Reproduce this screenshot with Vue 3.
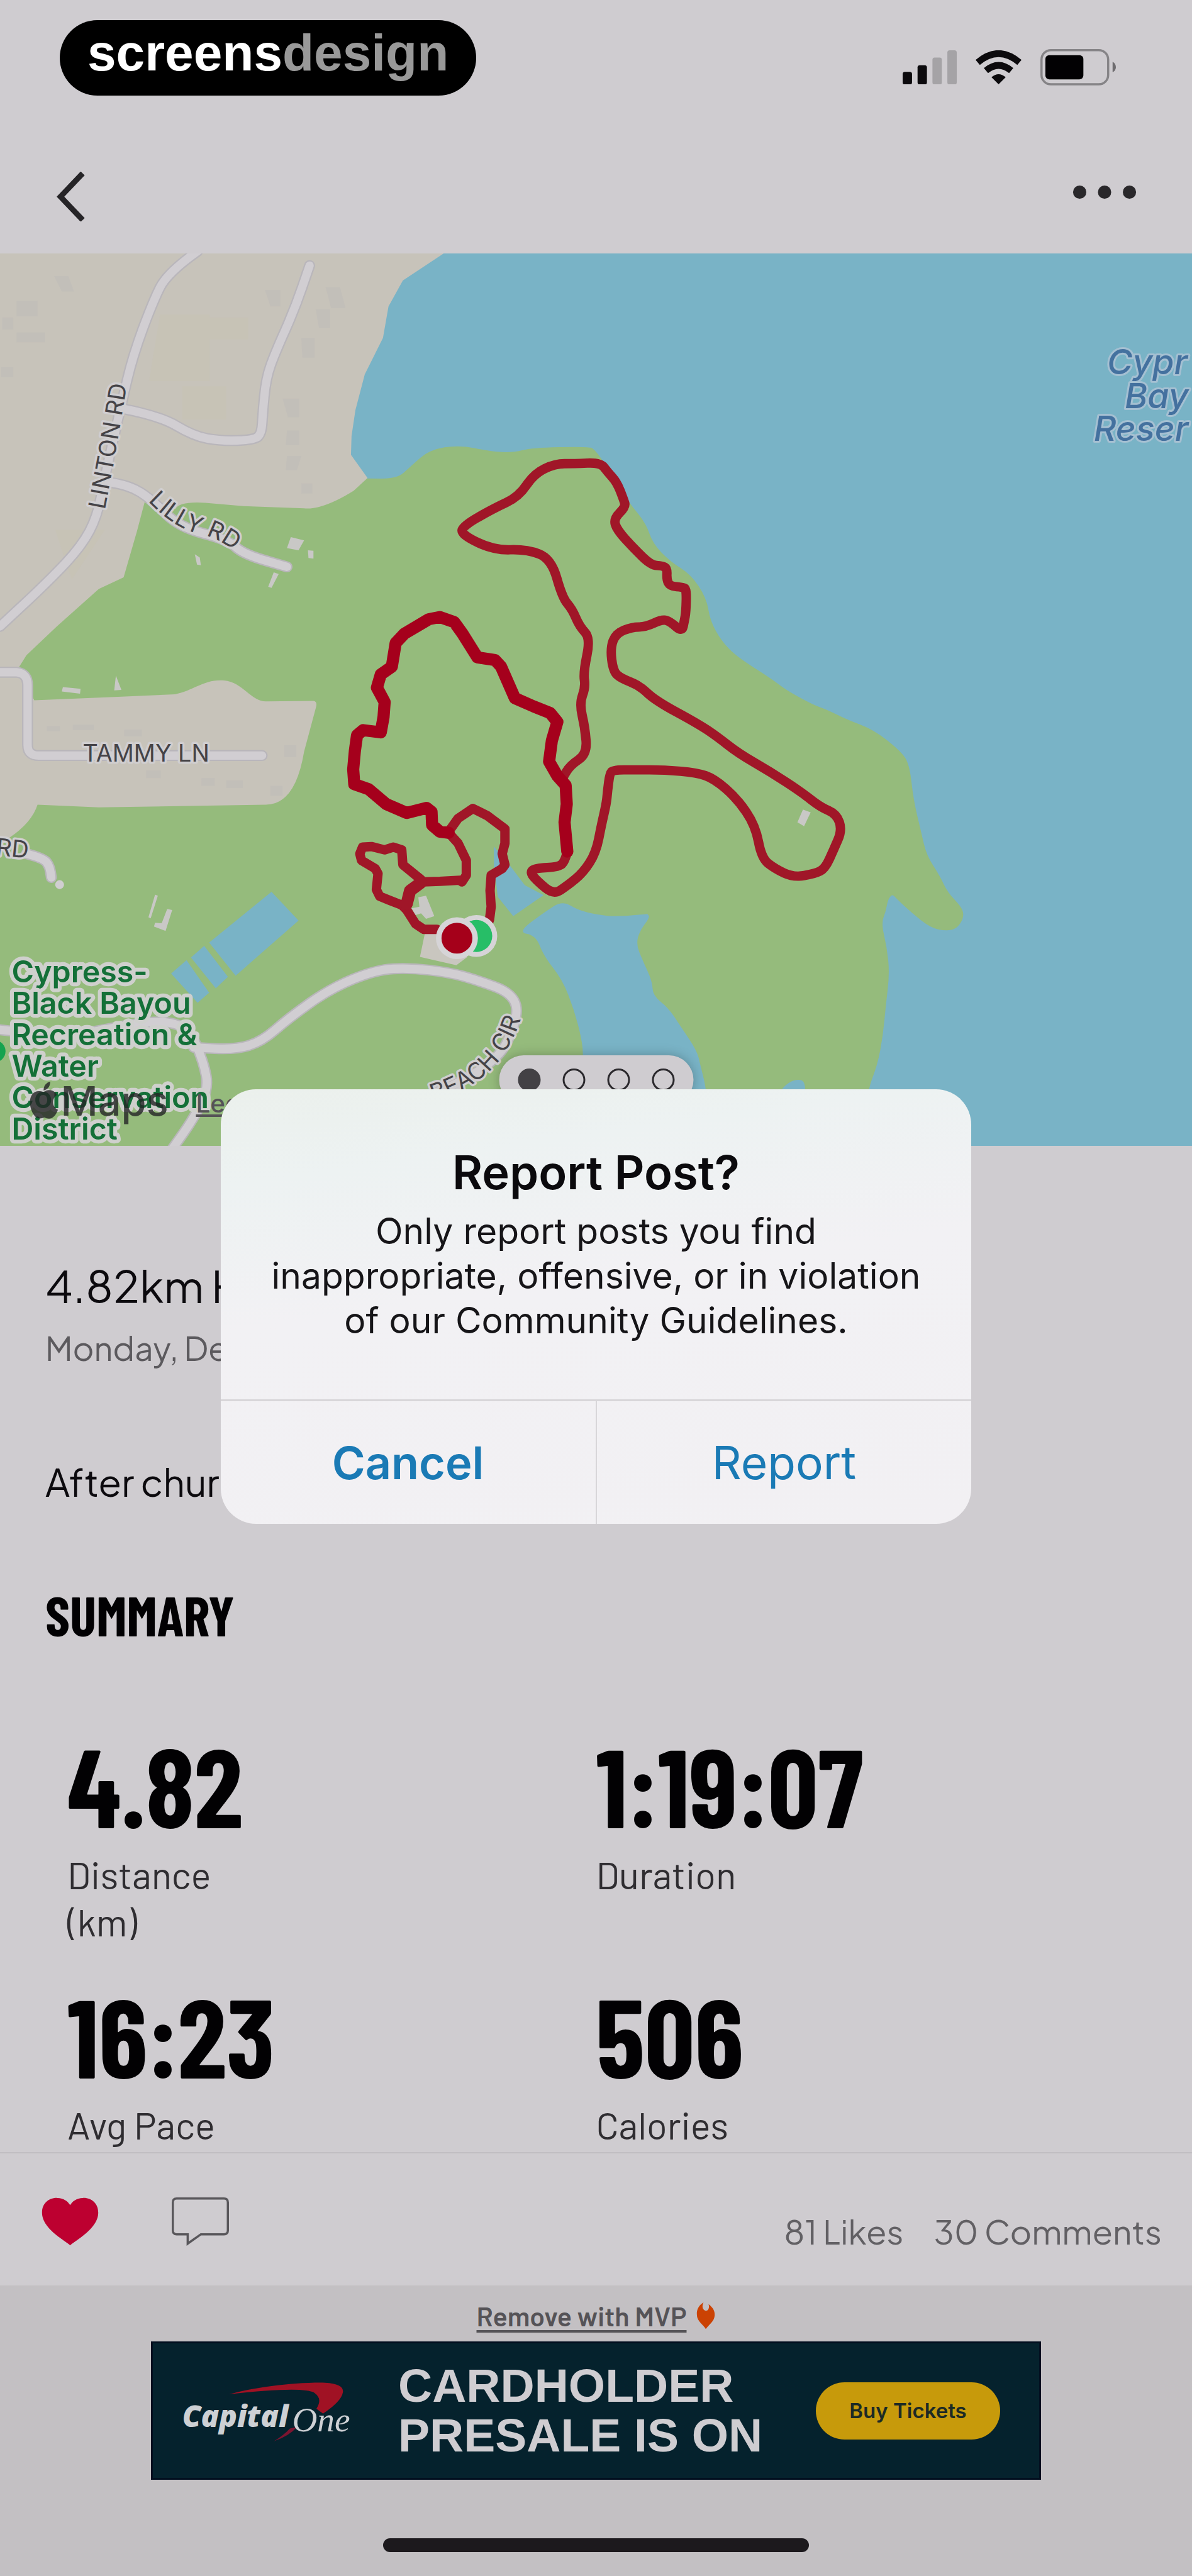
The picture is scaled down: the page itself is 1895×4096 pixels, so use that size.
<template>
  <div class="screen">
    <header>
      <div class="status-bar">
        <div class="brand"><span>screens</span><span class="brand-muted">design</span></div>
        <div class="status-icons">
          <svg class="icon-signal" viewBox="0 0 98 62" aria-hidden="true">
            <rect x="0" y="39" width="17" height="23" rx="4" fill="#0c0a0d" />
            <rect x="27" y="27" width="17" height="35" rx="4" fill="#0c0a0d" />
            <rect x="54" y="13" width="17" height="49" rx="4" fill="#a5a3a6" />
            <rect x="81" y="0" width="17" height="62" rx="4" fill="#a5a3a6" />
          </svg>
          <svg class="icon-wifi" viewBox="0 0 86 62" aria-hidden="true">
            <g fill="none" stroke="#0c0a0d" stroke-width="12">
              <path d="M5 22 Q43 -10 81 22" />
              <path d="M20 37 Q43 18 66 37" />
            </g>
            <path d="M30 49 Q43 38 56 49 L43 62 Z" fill="#0c0a0d" />
          </svg>
          <svg class="icon-battery" viewBox="0 0 137 66" aria-hidden="true">
            <rect x="2" y="2" width="121" height="62" rx="17" fill="none" stroke="#868487" stroke-width="4" />
            <rect x="9" y="11" width="69" height="44" rx="7" fill="#020103" />
            <path d="M131 23 Q137 26 137 33 Q137 39 131 42 Z" fill="#6f6d70" />
          </svg>
        </div>
      </div>
      <nav class="nav-bar">
        <button class="icon-btn" aria-label="Back">
          <svg class="icon-back" viewBox="0 0 51 90">
            <path d="M47 3 L7 45 L47 87" fill="none" stroke="#262427" stroke-width="10" />
          </svg>
        </button>
        <button class="icon-btn" aria-label="More options">
          <svg class="icon-more" viewBox="0 0 116 42">
            <circle v-for="cx in [13, 58, 103]" :key="cx" :cx="cx" cy="13" r="12" fill="#2a282b" />
          </svg>
        </button>
      </nav>
    </header>

    <section class="map" aria-label="Route map">
      <svg class="map-canvas" viewBox="0 459 2160 1618">
        <rect x="0" y="459" width="2160" height="1618" fill="#79b3c6" />
        <path class="park" :d="park" />
        <path class="land" :d="town" />
        <path class="land" :d="tammyBlock" />
        <g class="block">
          <path d="M290 570h90v120h-110z M100 960h90l-60 90z M380 575h70v40h-70z M330 700h80v60h-80z" />
        </g>
        <g class="house">
          <path d="M98 500h26l10 28h-22z M30 545h38v28h-38z M4 575h20v22H4z M30 602h52v18H30z M2 665h22v18H2z" />
          <path d="M480 525h28v30h-18z M590 520h26l10 38h-26z M572 560h26v34h-20z M546 612h24v36h-22z M512 722h30v34h-20z M520 780h22v26h-24z M520 826h26l-8 26h-20z M546 876h20v18h-20z" />
          <path d="M85 1316h24v9H85z M132 1313h38v10h-38z M225 1322h32v12h-32z M265 1396h26v14h-26z M365 1410h24v14h-24z M410 1414h30v14h-30z M490 1424h22v18h-22z M515 1350h22v22h-22z" />
        </g>
        <path v-for="(d, i) in ponds" :key="'pond' + i" :d="d" fill="#79b3c6" />
        <path v-for="(d, i) in roads" :key="'casing' + i" :d="d" class="road casing" />
        <path v-for="(d, i) in roads" :key="'road' + i" :d="d" class="road" />
        <path v-for="(d, i) in buildings" :key="'building' + i" :d="d" fill="#c9c8c6" />
        <circle cx="108" cy="1603" r="8" fill="#d0ced1" />
        <path d="M770 1691 L761 1734 L827 1749 L847 1734 L807 1691 Z" fill="#c9c6bf" />

        <g class="route">
          <path :d="northTrail" />
          <path :d="southTrail" />
          <path d="M762 1600 L743 1614 L737 1638" stroke-width="22" />
          <path :d="lakeLink" />
          <path :d="loopTrail" class="route-main" />
        </g>

        <circle cx="863" cy="1696" r="38" fill="#d6d4d7" />
        <circle cx="863" cy="1696" r="29" fill="#27be67" />
        <circle cx="828" cy="1700" r="38" fill="#d6d4d7" />
        <circle cx="828" cy="1700" r="28" fill="#a5001a" />

        <defs>
          <path id="linton" d="M190 924 L206 840 L223 740 L236 660" />
          <path id="lilly" d="M268 908 Q320 962 372 970 Q415 983 470 1035" />
          <path id="beach" d="M785 1996 Q880 1966 915 1906 Q942 1868 952 1810" />
        </defs>
        <g class="street">
          <text><textPath href="#linton">LINTON RD</textPath></text>
          <text><textPath href="#lilly">LILLY RD</textPath></text>
          <text><textPath href="#beach">BEACH CIR</textPath></text>
          <text x="150" y="1380">TAMMY LN</text>
          <text x="-8" y="1550" transform="rotate(6 0 1550)">RD</text>
        </g>
        <g class="lake-name">
          <text x="2006" y="678">Cypr</text>
          <text x="2038" y="739">Bay</text>
          <text x="1982" y="799">Reser</text>
        </g>
        <circle cx="-10" cy="1905" r="20" fill="#16a34f" />
        <g class="park-name">
          <text v-for="(line, i) in parkName" :key="line" x="21" :y="1780 + i * 57">{{ line }}</text>
        </g>
        <g class="attribution">
          <path d="M79 1979 C88 1972 99 1976 103 1984 C93 1991 94 2006 105 2011 C99 2027 91 2030 80 2025 C69 2030 61 2025 56 2009 C50 1988 60 1972 79 1979 Z M79 1976 C79 1967 84 1962 91 1960 C91 1969 86 1975 79 1976 Z" />
          <text x="110" y="2022" font-size="74">Maps</text>
        </g>
        <a href="#legal"><text class="legal" x="355" y="2016">Legal</text></a>
      </svg>
      <div class="pager">
        <button
          v-for="n in 4"
          :key="n"
          :class="['pager-dot', { active: page === n }]"
          :aria-label="'Slide ' + n"
          @click="page = n"
        ></button>
      </div>
    </section>

    <main class="post">
      <h1>4.82km H</h1>
      <p class="date">Monday, De</p>
      <p class="note">After chur</p>
      <h2>SUMMARY</h2>
      <dl class="stats">
        <div v-for="stat in stats" :key="stat.label" class="stat">
          <dd>{{ stat.value }}</dd>
          <dt>{{ stat.label }}<template v-if="stat.unit"><br />{{ stat.unit }}</template></dt>
        </div>
      </dl>
    </main>

    <div class="action-bar">
      <button class="icon-btn" aria-label="Like">
        <svg class="icon-action" viewBox="0 0 104 88">
          <path
            d="M52 87 C40 77 2 56 1 29 C0 11 14 0 29 1 C40 1 48 7 52 14 C56 7 64 1 75 1 C90 0 104 11 103 29 C102 56 64 77 52 87 Z"
            fill="#bd0030"
          />
        </svg>
      </button>
      <button class="icon-btn" aria-label="Comment">
        <svg class="icon-action" viewBox="0 0 104 88">
          <path
            d="M9 2 H95 Q102 2 102 9 V60 Q102 67 95 67 H53 L29 84 V67 H9 Q2 67 2 60 V9 Q2 2 9 2 Z"
            fill="none"
            stroke="#59575b"
            stroke-width="4"
          />
        </svg>
      </button>
      <div class="counts">
        <a href="#likes">81 Likes</a>
        <a href="#comments">30 Comments</a>
      </div>
    </div>

    <footer class="ad-area">
      <div class="remove-ad">
        <a href="#mvp">Remove with MVP</a>
        <svg class="icon-flame" viewBox="0 0 34 48" aria-hidden="true">
          <path
            d="M13 0 C9 8 12 14 17 15 C22 15 24 9 22 3 C30 9 34 16 33 24 C32 35 23 39 17 48 C12 39 1 34 1 22 C0 12 6 4 13 0 Z"
            fill="#cb4203"
          />
        </svg>
      </div>
      <div class="banner">
        <svg class="sponsor" viewBox="328 4310 312 125" role="img" aria-label="Capital One">
          <path
            d="M416 4342 C460 4330 530 4320 590 4321 Q624 4323 622 4338 Q620 4354 586 4377 L574 4368 Q586 4350 570 4339 Q548 4327 416 4342 Z"
            fill="#a01224"
          />
          <path d="M526 4404 L539 4401 Q525 4417 497 4427 Q515 4416 526 4404 Z" fill="#7c1530" />
          <text x="331" y="4401" class="sponsor-bold">Capital</text>
          <text x="530" y="4409" class="sponsor-thin">One</text>
        </svg>
        <p class="banner-text">CARDHOLDER<br />PRESALE IS ON</p>
        <button class="buy-btn">Buy Tickets</button>
      </div>
      <div class="home-indicator"></div>
    </footer>

    <div v-if="dialogOpen" class="overlay">
      <div class="dialog" role="alertdialog" aria-labelledby="dialog-title" aria-describedby="dialog-text">
        <div class="dialog-body">
          <h2 id="dialog-title">Report Post?</h2>
          <p id="dialog-text">
            Only report posts you find<br />inappropriate, offensive, or in violation<br />of our Community Guidelines.
          </p>
        </div>
        <div class="dialog-actions">
          <button class="cancel" @click="dialogOpen = false">Cancel</button>
          <button @click="dialogOpen = false">Report</button>
        </div>
      </div>
    </div>
  </div>
</template>

<script setup>
import { ref } from 'vue'

const page = ref(1)
const dialogOpen = ref(true)

const stats = [
  { value: '4.82', label: 'Distance', unit: '(km)' },
  { value: '1:19:07', label: 'Duration' },
  { value: '16:23', label: 'Avg Pace' },
  { value: '506', label: 'Calories' },
]

const parkName = ['Cypress-', 'Black Bayou', 'Recreation &', 'Water', 'Conservation', 'District']

// Turns a flat "x,y x,y" list into a curve that runs through the midpoints
const smooth = (points, close = false) => {
  const p = points.trim().split(/\s+/).map((pair) => pair.split(',').map(Number))
  let d = `M${p[0][0]} ${p[0][1]}`
  for (let i = 1; i < p.length - 1; i++) {
    const mx = (p[i][0] + p[i + 1][0]) / 2
    const my = (p[i][1] + p[i + 1][1]) / 2
    d += ` Q${p[i][0]} ${p[i][1]} ${mx} ${my}`
  }
  const last = p[p.length - 1]
  d += ` L${last[0]} ${last[1]}`
  return close ? d + ' Z' : d
}
const straight = (points) => 'M' + points.trim().split(/\s+/).join(' L')

const park =
  smooth(`0,860 666,867 720,867 744,845 778,815 833,806 889,818 930,820 964,811 1061,809 1080,813 1135,905
    1170,947 1183,985 1214,1017 1252,1041 1280,1083 1287,1125 1307,1161 1335,1190 1397,1229 1424,1250 1473,1277
    1497,1285 1535,1304 1583,1322 1631,1360 1648,1384 1655,1448 1669,1507 1679,1550 1703,1587 1717,1617 1743,1644
    1747,1662 1734,1683 1714,1687 1686,1681 1652,1654 1624,1628 1617,1620 1609,1630 1605,1652 1597,1673 1607,1716
    1612,1764 1605,1823 1600,1877 1590,1930 1572,1976 1560,2077`) + ' L0 2077 Z'

const town =
  straight(`0,459 804,459 730,508 704,555 694,612 661,678 644,743 637,790 636,824 666,866 641,889`) +
  ` Q585 924 551 921 L441 917 L372 911 Q325 908 318 922 L262 910 L248 963 L224 1046
    L179 1067 L103 1135 L48 1187 L33 1211 L62 1269 L0 1300 Z`

const tammyBlock =
  straight(`0,1215 40,1225 62,1269 207,1263 317,1258`) +
  ` C350 1252 370 1230 406 1233 C440 1236 455 1271 482 1271 L568 1270 Q575 1271 573 1280
    L551 1362 Q535 1458 482 1458 L179 1463 L68 1458 Q58 1490 17 1518 L0 1522 Z`

const ponds = [
  smooth(`1173,1656 1121,1662 1080,1657 1047,1649 1019,1632 985,1654 938,1689 971,1695 985,1732 1019,1775 1040,1829
    1054,1882 1057,1914 1060,2077 1290,2077 1280,1973 1269,1930 1263,1904 1232,1858 1211,1826 1183,1804 1182,1778
    1163,1737 1153,1711 1159,1687 1178,1662 1173,1656`, true),
  straight('895,1534 926,1571 951,1604 985,1622 930,1660 902,1625 895,1571') + 'Z',
  straight('492,1616 541,1668 427,1768 379,1708') + 'Z',
  straight('370,1714 413,1770 391,1791 346,1735') + 'Z',
  straight('338,1740 379,1799 358,1817 310,1764') + 'Z',
  'M1412 1980 Q1430 1955 1450 1957 Q1460 1958 1459 1980 Z',
]

const roads = [
  smooth('358,455 303,494 276,549 241,644 220,732 189,868 176,936 148,989 90,1051 0,1135'),
  smooth('220,740 289,753 351,790 400,799 461,797 474,785 476,750 482,685 499,638 534,560 561,481'),
  smooth('200,874 234,879 275,905 324,955 413,978 441,1004 520,1027'),
  'M0 1218 H30 Q50 1220 50 1242 V1350 Q50 1369 70 1369 H475',
  smooth('48,1547 79,1555 90,1570 93,1590'),
  smooth(`792,1979 895,1936 940,1845 930,1800 861,1775 813,1762 744,1754 682,1757 599,1791 523,1845 475,1887
    427,1902 351,1898`),
  smooth('0,1866 120,1880 241,1855 303,1850 344,1866 369,1925 378,1973 351,2027 310,2085'),
]

const buildings = [
  '527,973 551,979 541,997 520,993',
  '558,997 568,998 568,1012 559,1011',
  '353,1004 362,1010 364,1024 357,1023',
  '496,1037 505,1040 492,1065 486,1063',
  '114,1245 146,1248 145,1257 112,1253',
  '210,1224 220,1250 207,1251',
  '281,1621 286,1623 273,1664 269,1662',
  '303,1647 312,1649 300,1687 279,1679 281,1672 293,1673',
  '1455,1467 1469,1472 1457,1497 1445,1490',
  '758,1626 772,1623 787,1660 772,1665 763,1655 753,1658 746,1646 760,1643',
].map((points) => straight(points) + 'Z')

const southTrail = straight(`792,1684 768,1684 753,1674 737,1649 728,1640 705,1631 688,1624 682,1612 685,1583 680,1574
  655,1559 652,1547 657,1535 673,1534 697,1540 713,1535 728,1540 730,1567 762,1593 767,1598 797,1597 833,1595
  837,1598 845,1586 845,1559 830,1528 813,1509`)

const lakeLink = straight(`813,1507 830,1483 857,1465 883,1478 915,1502 915,1528 910,1547 915,1567 910,1574 890,1586
  888,1614 890,1643 887,1667`)

const loopTrail = straight(`813,1509 797,1507 783,1495 782,1471 773,1464 737,1473 700,1457 668,1430 642,1421 640,1394
  643,1361 647,1332 658,1323 690,1327 695,1299 697,1272 683,1246 690,1222 710,1208 717,1165 733,1148 777,1122
  797,1118 823,1127 838,1148 865,1191 897,1196 908,1208 933,1265 967,1280 997,1292 1010,1308 1000,1342 995,1380
  1010,1406 1025,1423 1027,1457 1023,1490 1028,1543`)

const northTrail = smooth(`1028,1543 1024,1560 1013,1571 970,1573 960,1581 975,1598 1003,1621 1028,1605 1057,1581 1080,1545
  1090,1494 1099,1455 1101,1432 1105,1402 1111,1395 1150,1395 1204,1395 1263,1400 1294,1411 1335,1446 1369,1496 1380,1555
  1404,1574 1438,1590 1477,1583 1495,1574 1511,1539 1526,1504 1516,1475 1486,1462 1452,1435 1395,1398 1338,1365 1300,1335
  1266,1312 1187,1269 1159,1242 1125,1229 1111,1216 1106,1174 1116,1148 1145,1136 1170,1136 1200,1122 1214,1126 1236,1145
  1240,1125 1243,1109 1244,1068 1238,1064 1214,1062 1208,1050 1209,1030 1200,1025 1180,1024 1149,994 1118,960 1112,940
  1134,918 1130,905 1118,874 1101,855 1088,838 1040,840 1006,840 968,858 940,900 895,921 840,952 835,968 895,997 954,995
  999,1012 1019,1083 1037,1104 1050,1135 1070,1156 1057,1219 1061,1245 1050,1275 1060,1318 1064,1366 1033,1387 1020,1409`)
</script>

<style>
body {
  margin: 0;
  background: #c3c0c3;
}
</style>

<style scoped>
.screen {
  position: relative;
  display: flex;
  flex-direction: column;
  min-height: 100vh;
  background: #cfccd0;
  color: #0c0a0e;
  font-family: 'Plus Jakarta Sans', Lato, sans-serif;
  overflow: hidden;
}

h1,
h2,
p,
dl,
dd,
dt {
  margin: 0;
}

button {
  border: 0;
  padding: 0;
  background: none;
  cursor: pointer;
}

svg {
  display: block;
}

.status-bar {
  display: flex;
  justify-content: space-between;
  align-items: flex-end;
  padding: 32px 121px 0 95px;
}

.brand {
  display: flex;
  padding: 8px 44px 24px 44px;
  border-radius: 60px;
  background: #000;
  color: #fff;
  font: bold 82px/88px 'Liberation Sans', sans-serif;
}

.brand-muted {
  color: #999;
}

.status-icons {
  display: flex;
  align-items: center;
  gap: 29px;
  padding-bottom: 16px;
}

.icon-signal {
  width: 86px;
}

.icon-wifi {
  width: 75px;
}

.icon-battery {
  width: 120px;
}

.nav-bar {
  display: flex;
  justify-content: space-between;
  align-items: center;
  height: 171px;
  padding: 80px 88px 0 90px;
}

.nav-bar .icon-btn {
  margin-bottom: 10px;
}

.icon-back {
  width: 45px;
}

.icon-more {
  width: 102px;
}

.map {
  position: relative;
  overflow: hidden;
}

.map-canvas {
  width: 100%;
  height: auto;
}

.park {
  fill: #95bb7c;
}

.land {
  fill: #c7c3ba;
}

.block {
  fill: #c8c3b2;
  opacity: 0.4;
}

.house {
  fill: #bcb9b8;
  opacity: 0.4;
}

.road {
  fill: none;
  stroke: #d1ced2;
  stroke-width: 15;
  stroke-linecap: round;
  stroke-linejoin: round;
}

.casing {
  stroke: #b9b6bb;
  stroke-width: 20;
}

.route {
  fill: none;
  stroke: #a01628;
  stroke-width: 17;
  stroke-linecap: round;
  stroke-linejoin: round;
}

.route-main {
  stroke: #a5001c;
  stroke-width: 22;
}

.street,
.lake-name,
.park-name {
  paint-order: stroke;
  stroke-linejoin: round;
  font-family: Inter, sans-serif;
}

.street {
  fill: #454347;
  stroke: #d0ced0;
  stroke-width: 8;
  font-size: 43px;
}

.lake-name {
  fill: #44719f;
  stroke: #a5c0d2;
  stroke-width: 7;
  font-size: 63px;
  font-style: italic;
  font-weight: 500;
}

.park-name {
  fill: #147038;
  stroke: #cfd0cd;
  stroke-width: 14;
  font-size: 55px;
  font-weight: 600;
}

.attribution {
  fill: #242426;
  opacity: 0.8;
  font-family: Inter, sans-serif;
  font-weight: 500;
}

.legal {
  fill: #555357;
  font: 500 46px Inter, sans-serif;
  text-decoration: underline;
}

.pager {
  position: absolute;
  left: 50%;
  bottom: 66px;
  transform: translateX(-50%);
  display: flex;
  align-items: center;
  gap: 35px;
  height: 78px;
  padding: 0 30px;
  border-radius: 39px;
  background: #cfccd0;
  box-shadow: 0 0 18px rgba(0, 0, 0, 0.25);
}

.pager-dot {
  box-sizing: border-box;
  width: 36px;
  height: 36px;
  border: 3px solid #2b292d;
  border-radius: 50%;
}

.pager-dot.active {
  border-color: #434145;
  background: #434145;
}

.post {
  padding: 180px 72px 6px;
}

h1 {
  font-size: 70px;
  line-height: 84px;
  font-weight: 400;
}

.date {
  margin-top: 25px;
  color: #5c5a5e;
  font-size: 52px;
  line-height: 64px;
}

.note {
  margin-top: 143px;
  font-size: 60px;
  line-height: 76px;
}

.post h2,
.stat dd {
  font-family: 'Barlow Condensed', 'Liberation Sans Narrow', 'Roboto Condensed', sans-serif;
  font-weight: 700;
  color: #020103;
}

.post h2 {
  margin-top: 129px;
  font-size: 88px;
  line-height: 88px;
}

.stats {
  display: grid;
  grid-template-columns: 1fr 1fr;
  gap: 55px 0;
  margin-top: 139px;
  padding: 0 35px;
}

.stat {
  display: flex;
  flex-direction: column;
  gap: 20px;
}

.stat dd {
  font-size: 176px;
  line-height: 173px;
}

.stat dt {
  color: #2f2d31;
  font: 400 60px/75px Barlow, Roboto, sans-serif;
}

.action-bar {
  display: flex;
  align-items: center;
  gap: 116px;
  height: 212px;
  padding: 6px 48px 0 66px;
  border-top: 2px solid #c1bec2;
  box-sizing: border-box;
}

.icon-action {
  width: 91px;
}

.counts {
  display: flex;
  gap: 48px;
  margin: 32px 0 0 auto;
}

.counts a {
  color: #626064;
  font-size: 53px;
  line-height: 66px;
  text-decoration: none;
}

.ad-area {
  flex: 1;
  display: flex;
  flex-direction: column;
  align-items: center;
  background: #c3c0c3;
}

.remove-ad {
  display: flex;
  align-items: center;
  gap: 16px;
  padding: 23px 0 16px;
}

.remove-ad a {
  color: #555357;
  font: 600 43px/50px Barlow, Roboto, sans-serif;
  text-underline-offset: 6px;
}

.icon-flame {
  width: 30px;
}

.banner {
  box-sizing: border-box;
  display: flex;
  align-items: center;
  width: 90%;
  max-width: 1415px;
  height: 220px;
  padding: 0 62px 0 44px;
  border: 3px solid #020f1f;
  background: #05222d;
}

.sponsor {
  width: 274px;
}

.sponsor-bold {
  fill: #cdd0d4;
  font: italic 800 54px 'Open Sans', sans-serif;
}

.sponsor-thin {
  fill: #cdd0d4;
  font: italic 63px 'Liberation Serif', serif;
}

.banner-text {
  margin-left: 72px;
  color: #cfcdd1;
  font: bold 75px/79px 'Liberation Sans', sans-serif;
  white-space: nowrap;
}

.buy-btn {
  width: 293px;
  height: 91px;
  margin-left: auto;
  border-radius: 46px;
  background: #c79a0b;
  color: #1c2a25;
  font: 600 33px Inter, sans-serif;
}

.home-indicator {
  width: 677px;
  height: 22px;
  margin-top: 93px;
  border-radius: 11px;
  background: #1c191d;
}

.overlay {
  position: absolute;
  inset: 0;
  display: flex;
  align-items: center;
  justify-content: center;
  padding-top: 59px;
}

.dialog {
  width: 63%;
  border-radius: 56px;
  overflow: hidden;
  background: linear-gradient(172deg, #ebf0ec, #edf2f2 18%, #f2f1f4 45%, #f2f0f3);
  font-family: Inter, sans-serif;
  text-align: center;
}

.dialog-body {
  padding: 84px 40px 90px;
}

.dialog h2 {
  color: #0b0a0d;
  font-size: 74px;
  line-height: 96px;
  font-weight: 600;
}

.dialog p {
  margin-top: 10px;
  color: #161518;
  font-size: 57px;
  line-height: 71px;
}

.dialog-actions {
  display: flex;
  border-top: 3px solid #d8d6d9;
}

.dialog-actions button {
  flex: 1;
  height: 195px;
  color: #1a7ab5;
  font: 400 73px Inter, sans-serif;
}

.dialog-actions .cancel {
  border-right: 2px solid #d8d6d9;
  font-size: 72px;
  font-weight: 600;
}
</style>
